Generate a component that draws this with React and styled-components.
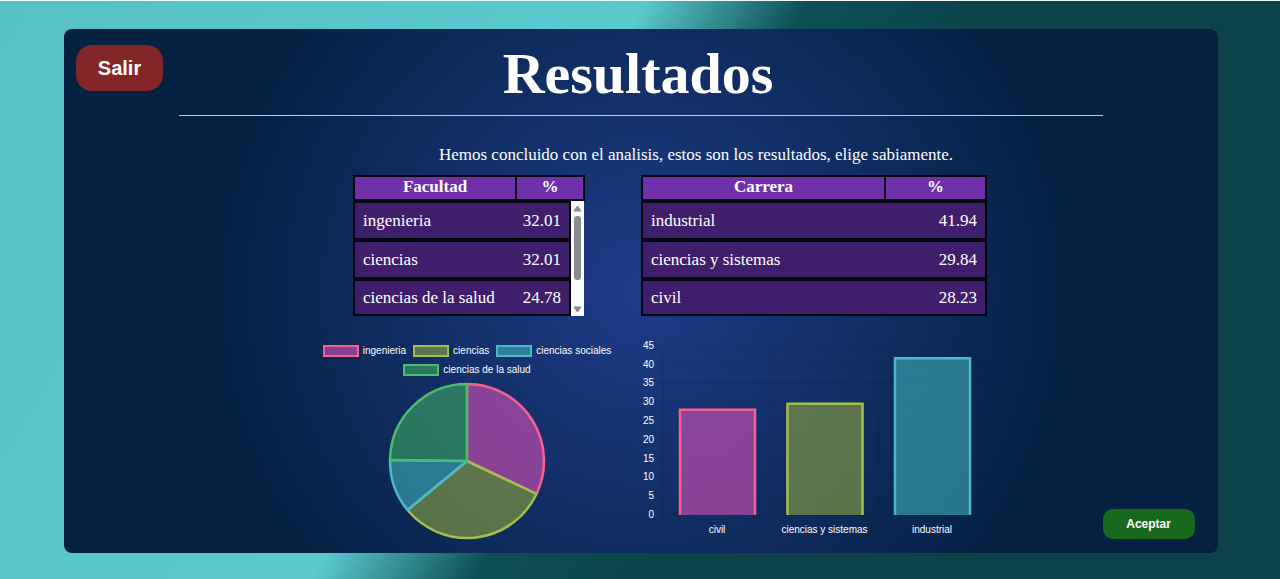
import React from 'react';
import styled, { createGlobalStyle } from 'styled-components';

const PURPLE = { fill: 'rgba(255, 88, 200, 0.5)', line: '#f4628a' };
const OLIVE = { fill: 'rgba(169, 188, 56, 0.5)', line: '#a5bd4e' };
const AQUA = { fill: 'rgba(70, 188, 190, 0.55)', line: '#4cb9c6' };
const GREEN = { fill: 'rgba(66, 180, 100, 0.55)', line: '#4dbd6c' };

const GlobalStyle = createGlobalStyle`
  *, *::before, *::after { box-sizing: border-box; }
  body {
    margin: 0;
    font-family: 'Liberation Serif', 'Times New Roman', serif;
    color: #fff;
  }
`;

const Page = styled.main`
  min-height: 100vh;
  padding: 28px 62px 27px 64px;
  display: flex;
  border-top: 1px solid #f2fbfb;
  background: linear-gradient(120deg, #56c1c8 0%, #5acacf 40%, #0d4f56 50%, #0c424a 62%, #0c424a 100%);
`;

const Panel = styled.section`
  flex: 1;
  min-width: 0;
  display: grid;
  grid-template-columns: 10% 1fr 10%;
  padding: 0 0 12px;
  border-radius: 8px;
  background: radial-gradient(circle, #1e3c88 0%, #042142 70%);
`;

const Side = styled.div`
  display: flex;
  flex-direction: column;
  justify-content: ${(p) => (p.$end ? 'flex-end' : 'flex-start')};
  align-items: flex-start;
  padding: ${(p) => (p.$end ? '0 0 2px' : '16px 0 0 12px')};
`;

const Button = styled.button`
  border: 0;
  color: #fff;
  font-family: 'Liberation Sans', Arial, sans-serif;
  font-weight: bold;
  cursor: pointer;
`;

const ExitButton = styled(Button)`
  width: 87px;
  height: 46px;
  border-radius: 16px;
  background: #822628;
  font-size: 20px;
`;

const AcceptButton = styled(Button)`
  width: 92px;
  height: 30px;
  border-radius: 10px;
  background: #18691c;
  font-size: 12px;
`;

const Content = styled.div`
  display: flex;
  flex-direction: column;
`;

const Title = styled.h1`
  margin: 0;
  padding: 11px 6px 7px 0;
  font-size: 58px;
  line-height: 68px;
  text-align: center;
`;

const Rule = styled.hr`
  width: 100%;
  margin: 0;
  border: 0;
  border-top: 1px solid #c4c4cc;
`;

const Intro = styled.p`
  margin: 0;
  padding: 28px 0 9px 110px;
  font-size: 17px;
  line-height: 22px;
  text-align: center;
`;

const Tables = styled.div`
  display: flex;
  justify-content: center;
  gap: 56px;
  padding-left: 58px;
`;

const ScoreTable = styled.table`
  display: block;
  width: ${(p) => p.$width};
  font-size: 17px;
  line-height: 20px;
  color: #fff;

  tr {
    display: grid;
    grid-template-columns: minmax(0, 1fr) ${(p) => p.$valueWidth};
  }
`;

const Head = styled.thead`
  display: block;
  border: 2px solid #03030c;
  background: #7030ac;

  th {
    height: 22px;
    padding: 0;
    line-height: 19px;
  }
  th + th { border-left: 2px solid #03030c; }
`;

const BodyRows = styled.tbody`
  display: flex;
  flex-direction: column;
  flex: 1;

  tr {
    height: 39px;
    border: 2px solid #03030c;
    background: #3f1f6c;
    align-items: center;
  }
  tr:last-child { height: 37px; }
  td { padding: 0 8px; white-space: nowrap; }
  td + td { padding-left: 0; text-align: right; }
`;

const ScrollBox = styled.div`
  position: relative;
  width: 232px;

  ${BodyRows} { padding-right: 14px; }
`;

const ScrollBar = styled.svg`
  position: absolute;
  right: 1px;
  bottom: 0;
  width: 13px;
  height: 115px;
`;

const Charts = styled.div`
  display: flex;
  justify-content: center;
  gap: 18px;
  padding: 24px 0 0 20px;
`;

const PieFigure = styled.figure`
  width: 300px;
  margin: 0;
  padding-top: 5px;
  display: flex;
  flex-direction: column;
  align-items: center;
`;

const Legend = styled.ul`
  margin: 0;
  padding: 0;
  list-style: none;
  display: flex;
  flex-wrap: wrap;
  justify-content: center;
  gap: 7px;
`;

const LegendItem = styled.li`
  display: flex;
  align-items: center;
  gap: 4px;
  font-family: 'Liberation Sans', Arial, sans-serif;
  font-size: 10px;
  line-height: 12px;
`;

const Swatch = styled.span`
  width: 36px;
  height: 12px;
  border: 2px solid ${(p) => p.$tone.line};
  background: ${(p) => p.$tone.fill};
`;

const Pie = styled.svg`
  width: 160px;
  height: 160px;
  margin-top: 5px;
`;

const Bars = styled.svg`
  width: 350px;
  height: 200px;
  font-family: 'Liberation Sans', Arial, sans-serif;
  font-size: 10px;
  fill: #fff;
`;

const faculties = [
  { name: 'ingenieria', value: '32.01' },
  { name: 'ciencias', value: '32.01' },
  { name: 'ciencias de la salud', value: '24.78' },
];

const careers = [
  { name: 'industrial', value: '41.94' },
  { name: 'ciencias y sistemas', value: '29.84' },
  { name: 'civil', value: '28.23' },
];

const slices = [
  { name: 'ingenieria', value: 32.01, tone: PURPLE },
  { name: 'ciencias', value: 32.01, tone: OLIVE },
  { name: 'ciencias sociales', value: 11.2, tone: AQUA },
  { name: 'ciencias de la salud', value: 24.78, tone: GREEN },
];

const bars = [
  { name: 'civil', value: 28.23, tone: PURPLE },
  { name: 'ciencias y sistemas', value: 29.84, tone: OLIVE },
  { name: 'industrial', value: 41.94, tone: AQUA },
];

const TICKS = [0, 5, 10, 15, 20, 25, 30, 35, 40, 45];

function Results({ label, rows, width, valueWidth }) {
  return (
    <ScoreTable $width={width} $valueWidth={valueWidth}>
      <Head>
        <tr>
          <th scope="col">{label}</th>
          <th scope="col">%</th>
        </tr>
      </Head>
      <BodyRows>
        {rows.map((row) => (
          <tr key={row.name}>
            <td>{row.name}</td>
            <td>{row.value}</td>
          </tr>
        ))}
      </BodyRows>
    </ScoreTable>
  );
}

function PieChart() {
  const radius = 77;
  const point = (share) => {
    const angle = (share / 100) * Math.PI * 2;
    return `${80 + radius * Math.sin(angle)} ${80 - radius * Math.cos(angle)}`;
  };
  let start = 0;
  return (
    <Pie viewBox="0 0 160 160" role="img" aria-label="Facultades">
      {slices.map(({ name, value, tone }) => {
        const from = start;
        start += value;
        return (
          <path
            key={name}
            d={`M80 80L${point(from)}A${radius} ${radius} 0 0 1 ${point(start)}Z`}
            fill={tone.fill}
            stroke={tone.line}
            strokeWidth="2.5"
            strokeLinejoin="bevel"
          />
        );
      })}
    </Pie>
  );
}

function BarChart() {
  const base = 175;
  const unit = 3.76;
  const step = 107.5;
  return (
    <Bars viewBox="0 0 350 200" role="img" aria-label="Carreras">
      <g stroke="#000" strokeOpacity="0.1">
        {TICKS.map((t) => (
          <line key={t} x1="20" x2="350" y1={base - t * unit} y2={base - t * unit} />
        ))}
        {[0, 1, 2, 3].map((i) => (
          <line key={i} x1={28 + i * step} x2={28 + i * step} y1="6" y2="183" />
        ))}
      </g>
      {TICKS.map((t) => (
        <text key={t} x="19" y={base - t * unit + 3} textAnchor="end">{t}</text>
      ))}
      {bars.map(({ name, value, tone }, i) => {
        const center = 82 + i * step;
        const top = base - value * unit;
        return (
          <g key={name}>
            <rect x={center - 38} y={top} width="77" height={base - top} fill={tone.fill} />
            <path
              d={`M${center - 37} ${base}V${top + 1}H${center + 38}V${base}`}
              fill="none"
              stroke={tone.line}
              strokeWidth="2.5"
            />
            <text x={center} y="193" textAnchor="middle">{name}</text>
          </g>
        );
      })}
    </Bars>
  );
}

export default function App() {
  return (
    <>
      <GlobalStyle />
      <Page>
        <Panel>
          <Side>
            <ExitButton type="button">Salir</ExitButton>
          </Side>
          <Content>
            <Title>Resultados</Title>
            <Rule />
            <Intro>Hemos concluido con el analisis, estos son los resultados, elige sabiamente.</Intro>
            <Tables>
              <ScrollBox>
                <Results label="Facultad" rows={faculties} width="100%" valueWidth="68px" />
                <ScrollBar viewBox="0 0 13 115" aria-hidden="true">
                  <rect width="13" height="115" fill="#fcfcfc" />
                  <path d="M3 10L6.500 5L10 10Z" fill="#8b8b8b" stroke="#8b8b8b" strokeLinejoin="round" />
                  <rect x="3" y="15" width="7" height="64" rx="3.500" fill="#8b8b8b" />
                  <path d="M3 106L6.500 111L10 106Z" fill="#8b8b8b" stroke="#8b8b8b" strokeLinejoin="round" />
                </ScrollBar>
              </ScrollBox>
              <Results label="Carrera" rows={careers} width="346px" valueWidth="101px" />
            </Tables>
            <Charts>
              <PieFigure>
                <Legend>
                  {slices.map((s) => (
                    <LegendItem key={s.name}>
                      <Swatch $tone={s.tone} />
                      {s.name}
                    </LegendItem>
                  ))}
                </Legend>
                <PieChart />
              </PieFigure>
              <BarChart />
            </Charts>
          </Content>
          <Side $end>
            <AcceptButton type="button">Aceptar</AcceptButton>
          </Side>
        </Panel>
      </Page>
    </>
  );
}
